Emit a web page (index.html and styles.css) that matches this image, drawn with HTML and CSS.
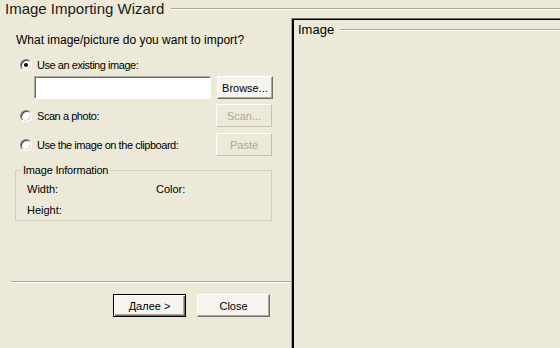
FILE: index.html
```html
<!DOCTYPE html>
<html>
<head>
<meta charset="utf-8">
<link rel="stylesheet" href="styles.css">
</head>
<body>
<div class="window">
  <div class="title-row">
    <span class="title">Image Importing Wizard</span>
    <span class="etch"></span>
  </div>
  <div class="main">
    <div class="left">
      <div class="question">What image/picture do you want to import?</div>
      <div class="radio-row first">
        <span class="radio checked"></span>
        <span class="label">Use an existing image:</span>
      </div>
      <div class="file-row">
        <div class="textbox"></div>
        <button class="btn">Browse...</button>
      </div>
      <div class="option-row scan">
        <div class="radio-row">
          <span class="radio"></span>
          <span class="label">Scan a photo:</span>
        </div>
        <button class="btn disabled">Scan...</button>
      </div>
      <div class="option-row paste">
        <div class="radio-row">
          <span class="radio"></span>
          <span class="label">Use the image on the clipboard:</span>
        </div>
        <button class="btn disabled">Paste</button>
      </div>
      <div class="info">
        <span class="info-legend">Image Information</span>
        <div class="info-grid">
          <span>Width:</span><span>Color:</span>
          <span>Height:</span><span></span>
        </div>
      </div>
      <div class="spacer"></div>
      <div class="separator"></div>
      <div class="actions">
        <button class="btn default"><u>Д</u>алее &gt;</button>
        <button class="btn">Close</button>
      </div>
    </div>
    <div class="right">
      <div class="section-title">
        <span>Image</span>
        <span class="etch"></span>
      </div>
    </div>
  </div>
</div>
</body>
</html>
```
FILE: styles.css
```css
* { box-sizing: border-box; }
html, body { margin: 0; padding: 0; }
body {
  background: #ECE9D8;
  font-family: "Liberation Sans", Arial, sans-serif;
  font-size: 11px;
  color: #000;
  width: 560px;
  height: 348px;
  overflow: hidden;
}
.window { display: flex; flex-direction: column; height: 348px; }
.title-row {
  height: 18px;
  display: flex;
  align-items: center;
  padding-left: 5px;
}
.title {
  font-size: 15px;
  line-height: 18px;
  color: #1a1a1a;
  white-space: nowrap;
}
.etch {
  flex: 1;
  height: 2px;
  border-top: 1px solid #ACA899;
  border-bottom: 1px solid #fff;
  margin-left: 7px;
}
.main { flex: 1; display: flex; }
.left {
  width: 291px;
  display: flex;
  flex-direction: column;
  padding-top: 15px;
}
.question { font-size: 12px; line-height: 14px; padding-left: 16px; }
.radio-row {
  display: flex;
  align-items: center;
  line-height: 14px;
  padding-left: 20px;
  gap: 5px;
  white-space: nowrap;
}
.label { letter-spacing: -0.45px; }
.radio-row.first { margin-top: 11px; }
.radio {
  width: 12px;
  height: 12px;
  border-radius: 50%;
  border: 1px solid;
  border-color: #808080 #fff #fff #808080;
  box-shadow: inset 1px 1px 0 #404040, inset -1px -1px 0 #D4D0C8;
  background: #fff;
  display: flex;
  align-items: center;
  justify-content: center;
  flex: none;
}
.radio.checked::after {
  content: "";
  width: 4px;
  height: 4px;
  border-radius: 50%;
  background: #000;
}
.file-row {
  display: flex;
  margin-top: 4px;
  padding-left: 34px;
  gap: 6px;
  height: 23px;
}
.textbox {
  width: 177px;
  height: 23px;
  background: #fff;
  border: 1px solid;
  border-color: #ACA899 #fff #fff #ACA899;
  box-shadow: inset 1px 1px 0 #716F64;
}
.btn {
  font-family: inherit;
  font-size: 11px;
  color: #000;
  height: 23px;
  padding: 0;
  background: #F5F4EE;
  border: 1px solid;
  border-color: #fff #716F64 #716F64 #fff;
  box-shadow: inset -1px -1px 0 #ACA899;
  border-radius: 0;
}
.file-row .btn, .option-row .btn { width: 56px; }
.btn.disabled {
  color: #ACA899;
  background: #ECE9D8;
  border-color: #fff #C5C2B2 #C5C2B2 #fff;
  box-shadow: none;
}
.option-row {
  display: flex;
  justify-content: space-between;
  align-items: center;
  height: 23px;
  padding-right: 19px;
}
.option-row.scan { margin-top: 5px; }
.option-row.paste { margin-top: 6px; }
.info {
  position: relative;
  margin: 14px 19px 0 15px;
  height: 51px;
  border: 1px solid #D0D0BF;
  padding: 11px 0 0 11px;
}
.info-legend {
  position: absolute;
  left: 5px;
  top: -8px;
  background: #ECE9D8;
  padding: 0 2px;
  line-height: 14px;
  letter-spacing: -0.2px;
}
.info-grid {
  display: grid;
  grid-template-columns: 129px auto;
  row-gap: 7px;
  line-height: 14px;
}
.spacer { flex: 1; }
.separator {
  margin-left: 11px;
  height: 2px;
  border-top: 1px solid #ACA899;
  border-bottom: 1px solid #fff;
}
.actions {
  display: flex;
  gap: 11px;
  padding-left: 113px;
  margin-top: 11px;
  margin-bottom: 31px;
}
.actions .btn { width: 73px; height: 23px; }
.btn.default {
  border: 1px solid #000;
  box-shadow: inset 1px 1px 0 #fff, inset -1px -1px 0 #716F64, inset -2px -2px 0 #ACA899;
}
.right {
  flex: 1;
  border-top: 1px solid #716F64;
  border-left: 1px solid #ACA899;
  box-shadow: inset 1px 1px 0 #000, inset 2px 0 0 #000;
  padding: 4px 0 0 6px;
}
.section-title {
  display: flex;
  align-items: center;
  line-height: 14px;
  font-size: 13px;
}
.section-title .etch { margin-left: 6px; }
```
